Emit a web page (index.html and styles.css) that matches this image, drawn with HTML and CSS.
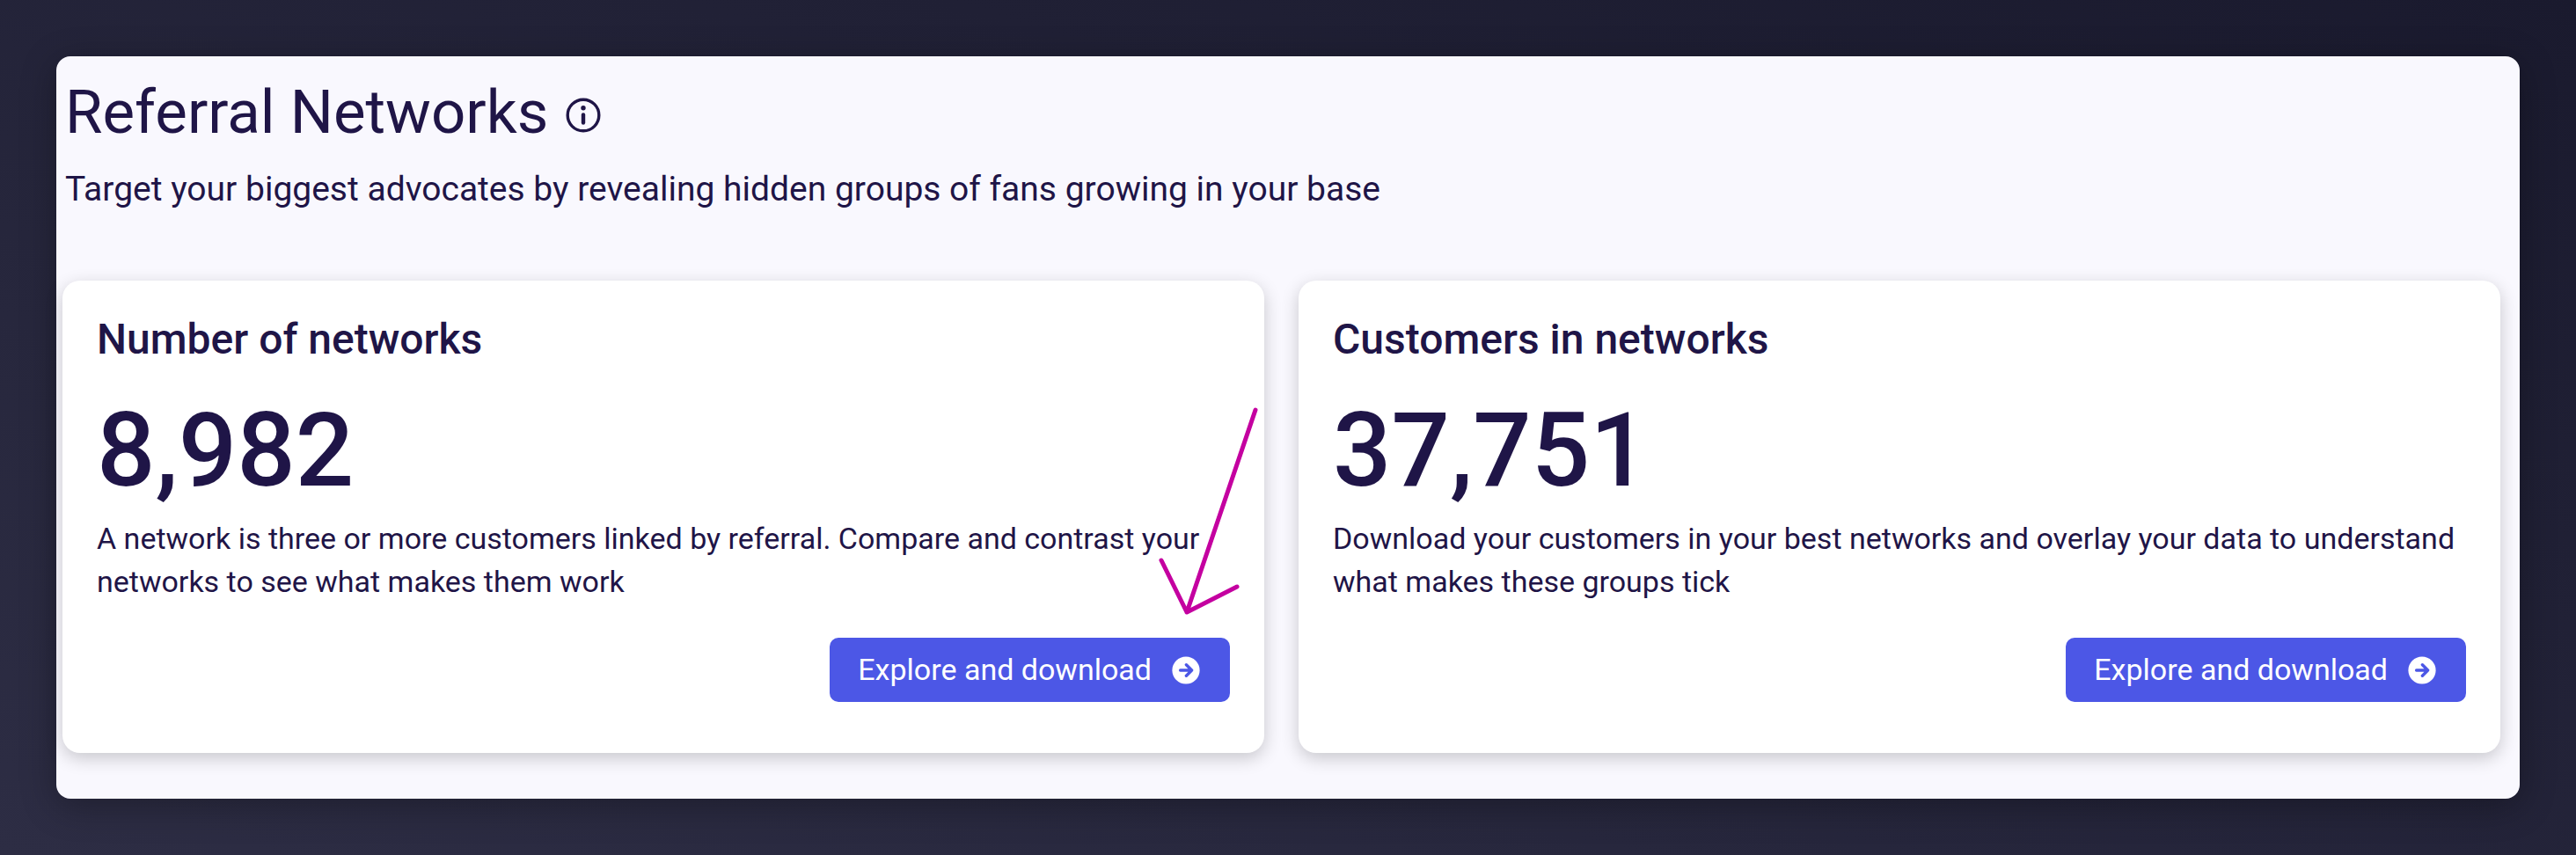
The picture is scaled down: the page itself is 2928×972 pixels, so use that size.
FILE: index.html
```html
<!DOCTYPE html>
<html lang="en">
<head>
    <meta charset="UTF-8">
    <meta name="viewport" content="width=device-width, initial-scale=1.0">
    <title>Referral Networks</title>
    <link rel="stylesheet" href="styles.css">
</head>
<body>
    <main class="panel">
        <header class="header">
            <div class="title-row">
                <h1 class="title">Referral Networks</h1>
                <button class="info-btn" type="button" aria-label="About referral networks">
                    <svg class="info-icon" viewBox="0 0 40 40" aria-hidden="true">
                        <circle cx="20" cy="20" r="17.8" fill="none" stroke="currentColor" stroke-width="3.4"/>
                        <circle cx="20" cy="11.8" r="2.7" fill="currentColor"/>
                        <path d="M20 19.4v9.2" fill="none" stroke="currentColor" stroke-width="4.4" stroke-linecap="round"/>
                    </svg>
                </button>
            </div>
            <p class="subtitle">Target your biggest advocates by revealing hidden groups of fans growing in your base</p>
        </header>

        <div class="cards">
            <section class="card">
                <h2 class="card-title">Number of networks</h2>
                <p class="card-value">8,982</p>
                <p class="card-text">A network is three or more customers linked by referral. Compare and contrast your networks to see what makes them work</p>
                <button class="explore-btn" type="button">
                    Explore and download
                    <svg class="explore-icon" viewBox="0 0 32 32" aria-hidden="true">
                        <circle cx="16" cy="16" r="15.6" fill="currentColor"/>
                        <path class="explore-arrow" d="M9.6 16H22M16.4 9.8l6.2 6.2-6.2 6.2"/>
                    </svg>
                </button>

                <!-- hand drawn pointer to the button -->
                <svg class="pointer" viewBox="0 0 115 239" aria-hidden="true">
                    <path d="M111 4L33 234M4 175L33 234L90 205"/>
                </svg>
            </section>

            <section class="card">
                <h2 class="card-title">Customers in networks</h2>
                <p class="card-value">37,751</p>
                <p class="card-text">Download your customers in your best networks and overlay your data to understand what makes these groups tick</p>
                <button class="explore-btn" type="button">
                    Explore and download
                    <svg class="explore-icon" viewBox="0 0 32 32" aria-hidden="true">
                        <circle cx="16" cy="16" r="15.6" fill="currentColor"/>
                        <path class="explore-arrow" d="M9.6 16H22M16.4 9.8l6.2 6.2-6.2 6.2"/>
                    </svg>
                </button>
            </section>
        </div>
    </main>
</body>
</html>
```
FILE: styles.css
```css
* {
    margin: 0;
    padding: 0;
    box-sizing: border-box;
}

body {
    font-family: Roboto, 'Liberation Sans', sans-serif;
    background: linear-gradient(to bottom left, #1a1a2e 0%, #2d2d44 100%);
    color: #1f1547;
    min-height: 100vh;
    padding: 64px;
}

.panel {
    background: #f9f8fe;
    border-radius: 16px;
    padding: 22px 22px 52px 7px;
    box-shadow: 0 8px 40px rgba(0, 0, 0, 0.3);
}

.header {
    padding-left: 3px;
    margin-bottom: 80px;
}

.title-row {
    display: flex;
    align-items: center;
    gap: 20px;
    margin-bottom: 21px;
}

.title {
    font-size: 69px;
    font-weight: 400;
    line-height: 84px;
}

.info-btn {
    display: flex;
    margin-top: 6px;
    background: none;
    border: none;
    color: inherit;
    cursor: pointer;
}

.info-icon {
    width: 40px;
    height: 40px;
}

.subtitle {
    font-size: 39px;
    line-height: 48px;
}

.cards {
    display: grid;
    grid-template-columns: 1fr 1fr;
    gap: 39px;
}

.card {
    position: relative;
    display: flex;
    flex-direction: column;
    background: #fff;
    border-radius: 20px;
    padding: 39px 39px 58px;
    box-shadow: 0 6px 20px rgba(0, 0, 0, 0.2);
}

.card-title {
    font-size: 48px;
    font-weight: 500;
    line-height: 56px;
    margin-bottom: 38px;
}

.card-value {
    font-size: 117px;
    font-weight: 500;
    line-height: 120px;
    margin-bottom: 16px;
}

.card-text {
    font-size: 34px;
    line-height: 49px;
    margin-bottom: 39px;
}

.explore-btn {
    display: flex;
    align-items: center;
    align-self: flex-end;
    gap: 23px;
    padding: 12px 34px 12px 32px;
    background: #4c57e6;
    color: #fff;
    border: none;
    border-radius: 10px;
    font-family: inherit;
    font-size: 34px;
    line-height: 49px;
    cursor: pointer;
}

.explore-icon {
    width: 32px;
    height: 32px;
}

.explore-arrow {
    fill: none;
    stroke: #4c57e6;
    stroke-width: 3.4;
    stroke-linecap: round;
    stroke-linejoin: round;
}

.pointer {
    position: absolute;
    right: 6px;
    bottom: 155px;
    width: 115px;
    height: 239px;
    pointer-events: none;
}

.pointer path {
    fill: none;
    stroke: #c400a0;
    stroke-width: 5;
    stroke-linecap: round;
    stroke-linejoin: round;
}

@media (max-width: 1200px) {
    .cards {
        grid-template-columns: 1fr;
    }
}
```
